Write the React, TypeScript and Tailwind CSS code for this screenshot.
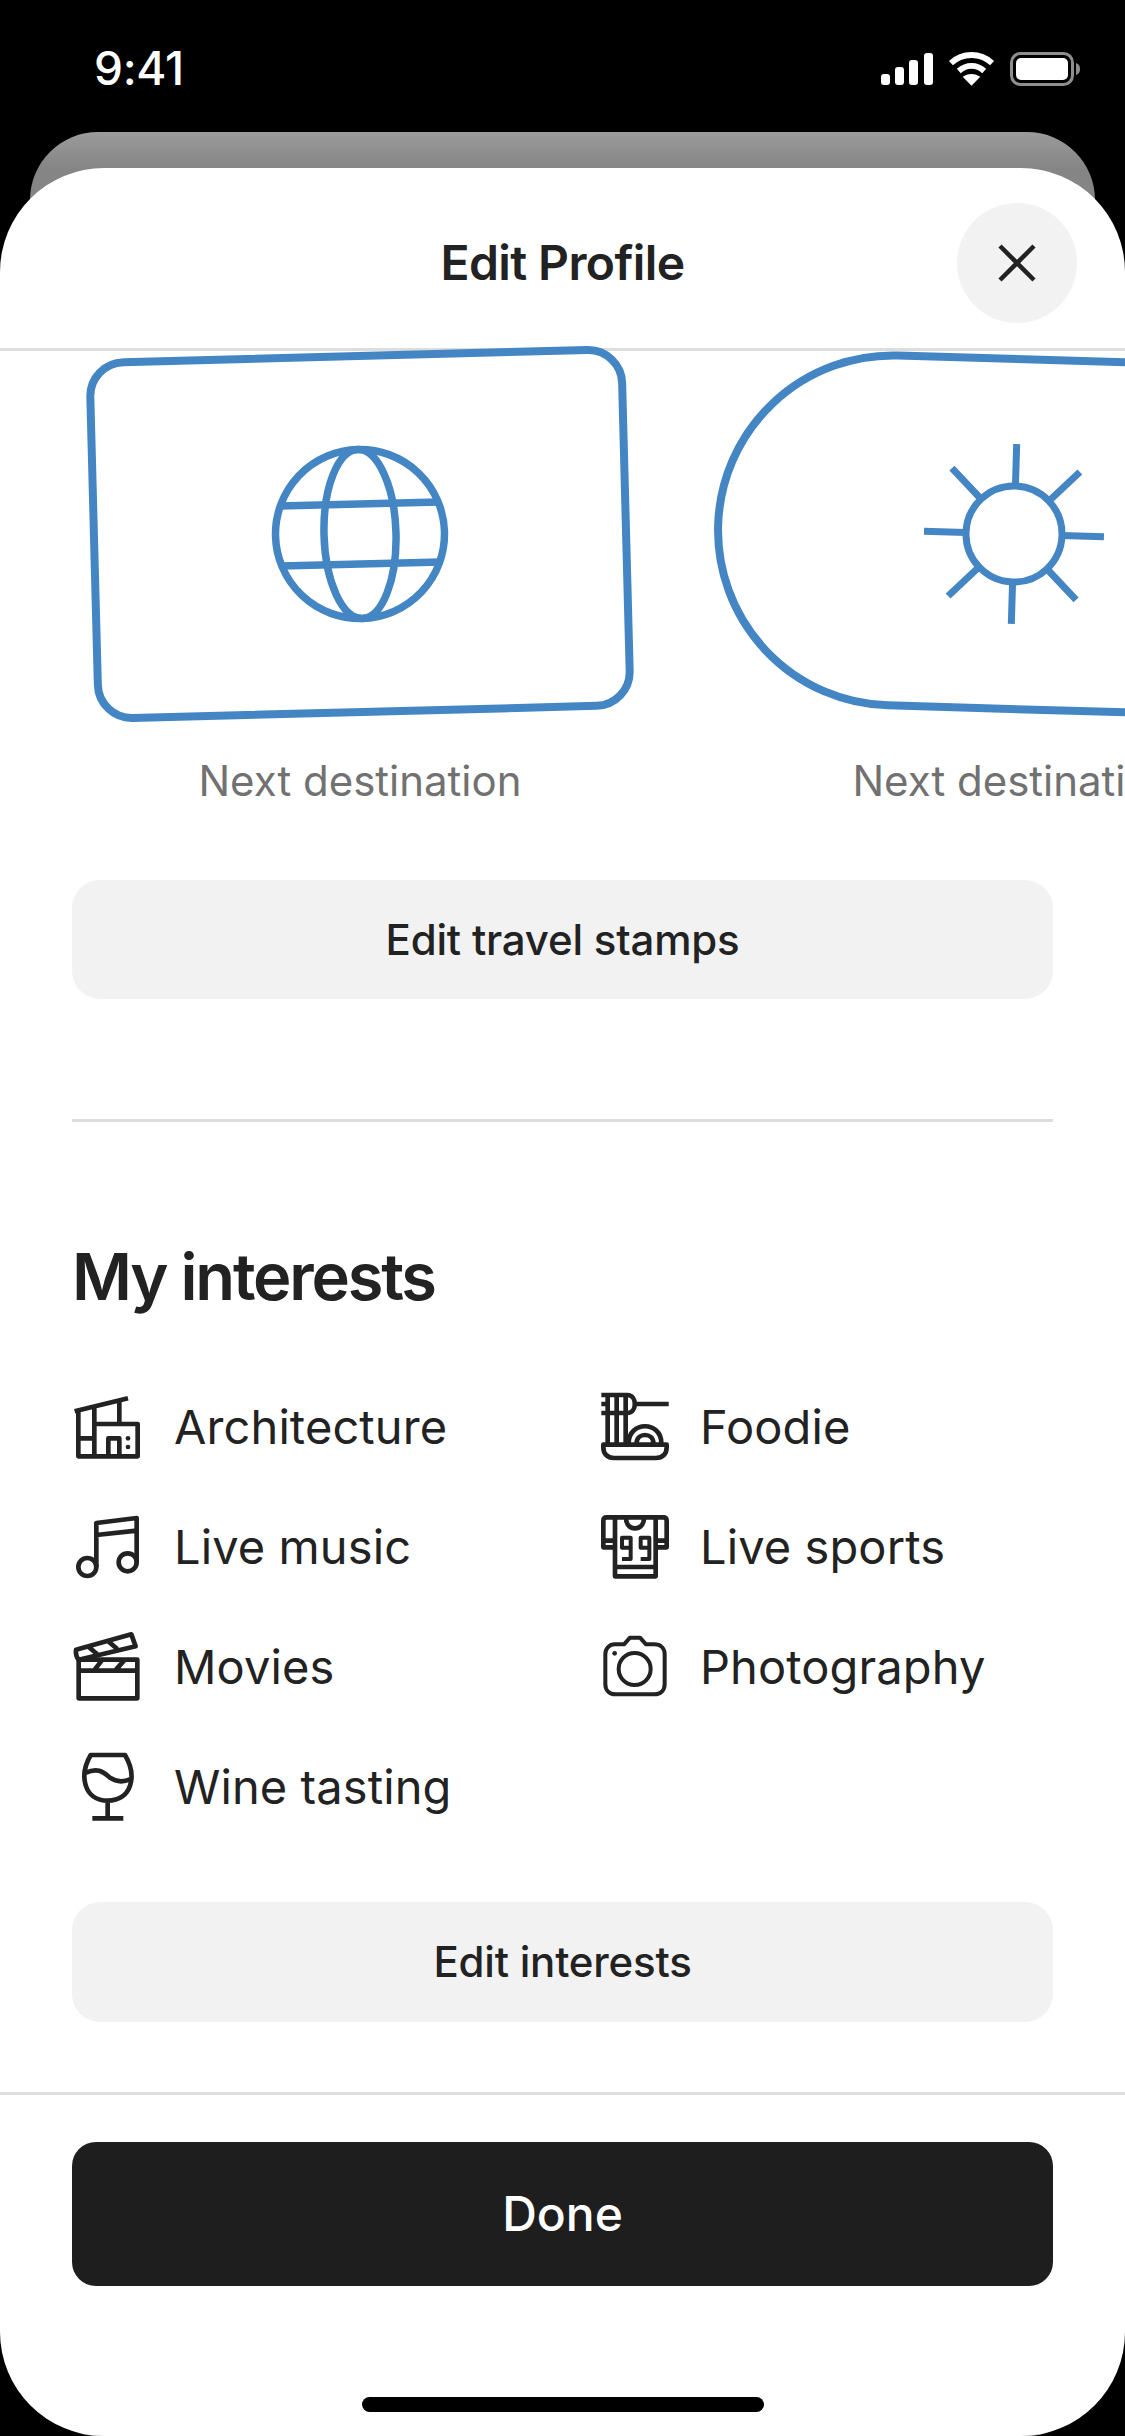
import React from "react";

const font = "font-['Inter','Liberation_Sans',sans-serif]";
const ink = "#222222";

function Globe() {
  return (
    <svg width="180" height="180" viewBox="0 0 180 180" fill="none" stroke="#4486c3" strokeWidth="7.5">
      <circle cx="90" cy="90" r="84.5" />
      <ellipse cx="90" cy="90" rx="36" ry="84.5" />
      <path d="M10 60H170M10 120H170" />
    </svg>
  );
}

function Sun() {
  return (
    <svg width="184" height="184" viewBox="0 0 184 184" fill="none" stroke="#4486c3" strokeWidth="7">
      <circle cx="92" cy="92" r="48" />
      <path d="M92 2V44M92 140V182M2 92H44M140 92H182M28 28L58 58M126 126L156 156M156 28L126 58M58 126L28 156" />
    </svg>
  );
}

const iconProps = {
  width: 72,
  height: 72,
  viewBox: "30 36 216 216",
  fill: "none",
  stroke: ink,
  strokeWidth: 14,
  strokeLinejoin: "round" as const,
  className: "shrink-0",
};

const icons: Record<string, React.ReactNode> = {
  Architecture: (
    <svg {...iconProps}>
      <path d="M44 97L204 58M55 95V232H233V135H103M103 86V232M178 68V135M55 178H103M145 232V178H178V232" />
      <circle cx="204" cy="178" r="7" fill={ink} stroke="none" />
      <circle cx="204" cy="204" r="7" fill={ink} stroke="none" />
    </svg>
  ),
  Foodie: (
    <svg {...iconProps}>
      <path d="M34 48H112C142 48 142 102 112 102H34M34 75H50M132 75H236M53 48V192M80 48V192M107 48V192" />
      <path d="M40 197H230V205C230 225 218 237 198 237H72C52 237 40 225 40 205Z" />
      <path d="M116 192C116 125 214 125 214 192M140 192C140 160 190 160 190 192" />
    </svg>
  ),
  "Live music": (
    <svg {...iconProps}>
      <circle cx="82" cy="204" r="27" />
      <circle cx="203" cy="190" r="27" />
      <path d="M109 204V72L230 57V190M109 108L230 95" />
    </svg>
  ),
  "Live sports": (
    <svg {...iconProps}>
      <path d="M50 55H220Q230 55 230 65V145H197V232H75V145H40V65Q40 55 50 55ZM75 55V145M197 55V145M40 125H75M197 125H230M75 204H197M108 58C108 98 162 98 162 58" />
      <path d="M122 146H96V116H122V180H96M178 146H152V116H178V180H152" strokeWidth="12" />
    </svg>
  ),
  Movies: (
    <svg {...iconProps}>
      <path d="M56 122H232V238H56ZM56 155H232M125 125L104 152M192 125L168 152" />
      <path d="M48 92L214 46L227 82L56 122Q46 110 48 92ZM86 84L112 106M146 68L172 90" />
    </svg>
  ),
  Photography: (
    <svg {...iconProps} strokeWidth="12">
      <path d="M75 76H102L120 56H150L168 76H193C212 76 224 88 224 106V195C224 214 212 226 193 226H76C58 226 46 214 46 195V106C46 88 58 76 75 76Z" />
      <circle cx="134" cy="150" r="48" />
      <circle cx="74" cy="103" r="7" fill={ink} stroke="none" />
    </svg>
  ),
  "Wine tasting": (
    <svg {...iconProps}>
      <path d="M92 48H195C232 110 216 185 143 185C72 185 56 110 92 48ZM76 102C115 84 130 100 150 116C170 130 190 130 212 120M143 185V238M97 238H190" />
    </svg>
  ),
};

function Interest({ name, right }: { name: string; right?: boolean }) {
  return (
    <div className="flex h-[120px] items-center">
      {icons[name]}
      <span className={`${right ? "ml-[28px]" : "ml-[32px]"} text-[47px] leading-[56px] tracking-[0.1px] text-[#222222]`}>{name}</span>
    </div>
  );
}

function GrayButton({ label, height }: { label: string; height: string }) {
  return (
    <div className={`mx-[72px] flex ${height} items-center justify-center rounded-[28px] bg-[#f2f2f2] text-[42px] leading-[48px] font-medium tracking-[-0.2px] text-[#222222]`}>
      {label}
    </div>
  );
}

export default function App() {
  return (
    <div className={`flex h-[2436px] w-[1125px] flex-col overflow-hidden bg-black ${font}`}>
      <div className="flex h-[132px] shrink-0 items-start justify-between pt-[44px] pr-[45px] pl-[94px]">
        <span className="text-[46px] leading-[48px] font-medium tracking-[-0.3px] text-white">9:41</span>
        <div className="flex items-center gap-[15px] pt-[8px]">
          <svg width="52" height="32" viewBox="0 0 52 32" fill="white">
            <rect x="0" y="21" width="9" height="11" rx="3" />
            <rect x="14" y="14" width="9" height="18" rx="3" />
            <rect x="28" y="7" width="9" height="25" rx="3" />
            <rect x="43" y="0" width="9" height="32" rx="3" />
          </svg>
          <svg width="47" height="34" viewBox="0 0 48 34" fill="none" stroke="white" strokeWidth="6">
            <path d="M3 11C15 0 33 0 45 11M11 19C19 12 29 12 37 19" />
            <path d="M24 34L15 25C20 21 28 21 33 25Z" fill="white" stroke="none" />
          </svg>
          <svg width="70" height="34" viewBox="0 0 70 34" fill="none">
            <rect x="1.5" y="1.5" width="61" height="31" rx="9" stroke="#8e8e8e" strokeWidth="3" />
            <rect x="6" y="6" width="52" height="22" rx="5" fill="white" />
            <path d="M66 11C69 12 70 14 70 17C70 20 69 22 66 23Z" fill="#8e8e8e" />
          </svg>
        </div>
      </div>

      <div className="mx-[30px] flex flex-1 flex-col rounded-[68px] bg-[linear-gradient(#9b9b9b,#858585_36px,#858585)] pt-[36px]">
        <div className="-mx-[30px] flex flex-1 flex-col overflow-hidden rounded-[104px] bg-white">
          <div className="grid h-[183px] shrink-0 grid-cols-[1fr_auto_1fr] items-center border-b-[3px] border-[#dddddd] pt-[10px]">
            <div />
            <span className="text-[48px] leading-[56px] font-semibold tracking-[-0.6px] text-[#222222]">Edit Profile</span>
            <div className="flex justify-end pr-[48px]">
              <div className="flex h-[120px] w-[120px] items-center justify-center rounded-full bg-[#f2f2f2]">
                <svg width="40" height="40" viewBox="0 0 40 40" fill="none" stroke={ink} strokeWidth="4.5">
                  <path d="M3 3L37 37M37 3L3 37" />
                </svg>
              </div>
            </div>
          </div>

          <div className="flex min-h-0 flex-1 flex-col">
            <div className="flex shrink-0 gap-[84px] pt-[4px] pl-[90px]">
              <div className="flex w-[540px] shrink-0 flex-col items-center">
                <div className="-my-[3px] flex h-[364px] w-[540px] -rotate-[1.5deg] items-center justify-center rounded-[38px] border-[8px] border-[#4486c3]">
                  <Globe />
                </div>
                <span className="mt-[44px] text-[42px] leading-[48px] whitespace-nowrap text-[#717171]">Next destination</span>
              </div>
              <div className="flex w-[600px] shrink-0 flex-col items-center">
                <div className="flex h-[358px] w-[600px] rotate-[1.7deg] items-center justify-center rounded-full border-[8px] border-[#4486c3]">
                  <Sun />
                </div>
                <span className="mt-[44px] text-[42px] leading-[48px] whitespace-nowrap text-[#717171]">Next destination</span>
              </div>
            </div>

            <div className="mt-[75px]">
              <GrayButton label="Edit travel stamps" height="h-[119px]" />
            </div>
            <div className="mx-[72px] mt-[120px] h-[3px] shrink-0 bg-[#dddddd]" />
            <h2 className="mt-[115px] ml-[72px] text-[65px] leading-[80px] font-semibold tracking-[-2.2px] text-[#222222]">My interests</h2>
            <div className="mt-[50px] grid grid-cols-[530px_1fr] pl-[70px]">
              <Interest name="Architecture" />
              <Interest name="Foodie" right />
              <Interest name="Live music" />
              <Interest name="Live sports" right />
              <Interest name="Movies" />
              <Interest name="Photography" right />
              <Interest name="Wine tasting" />
            </div>
            <div className="mt-[55px]">
              <GrayButton label="Edit interests" height="h-[120px]" />
            </div>
          </div>

          <div className="flex h-[344px] shrink-0 flex-col items-center border-t-[3px] border-[#dddddd] pt-[47px]">
            <div className="flex h-[144px] w-[981px] items-center justify-center rounded-[24px] bg-[#1e1e1e] text-[48px] leading-[56px] font-medium text-white">
              Done
            </div>
            <div className="mt-[111px] h-[15px] w-[402px] rounded-full bg-black" />
          </div>
        </div>
      </div>
    </div>
  );
}
